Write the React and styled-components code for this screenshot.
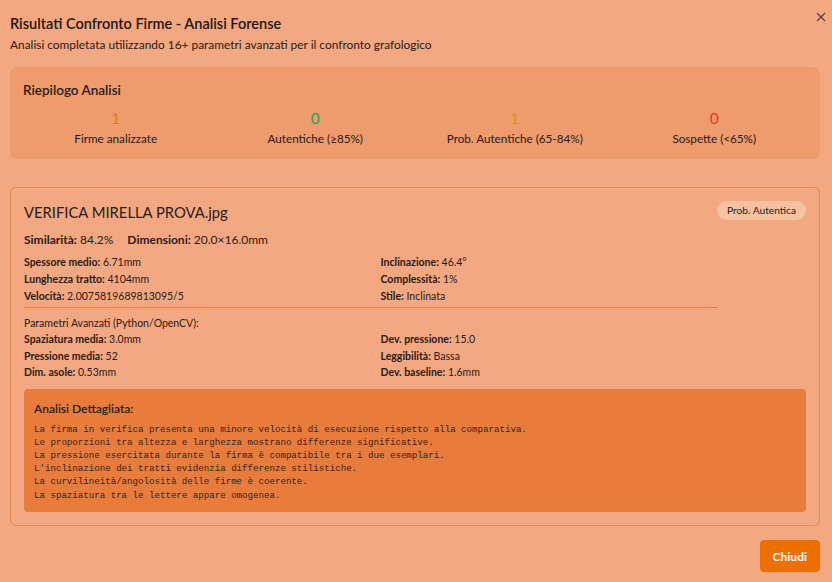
import React from 'react'
import styled, { createGlobalStyle } from 'styled-components'

const Global = createGlobalStyle`
  html, body {
    margin: 0;
    padding: 0;
    background: #f3a882;
  }
  body {
    font-family: Lato, "Noto Sans", sans-serif;
    color: #2a1a12;
  }
`

const Dialog = styled.div`
  position: relative;
  width: 832px;
  height: 582px;
  box-sizing: border-box;
  padding: 13px 12px 10px 10px;
  background: #f3a882;
  display: flex;
  flex-direction: column;
`

const Close = styled.button`
  position: absolute;
  top: 9px;
  right: 3px;
  width: 16px;
  height: 16px;
  padding: 0;
  border: 0;
  background: none;
  color: #5a4036;
  display: flex;
  align-items: center;
  justify-content: center;
`

const Title = styled.h2`
  margin: 0;
  font-size: 14.5px;
  font-weight: 600;
  line-height: 22px;
  color: #22160f;
`

const Subtitle = styled.p`
  margin: 1px 0 0;
  font-size: 11.9px;
  line-height: 18px;
`

const Summary = styled.section`
  margin-top: 13px;
  background: #ee9b6d;
  border-radius: 7px;
  padding: 14px 6px 12px;
`

const SummaryTitle = styled.h3`
  margin: 0 7px 9px;
  font-size: 13.5px;
  font-weight: 600;
  line-height: 18px;
`

const Stats = styled.div`
  display: grid;
  grid-template-columns: repeat(4, 1fr);
`

const Stat = styled.div`
  text-align: center;
`

const StatValue = styled.div`
  font-size: 15.5px;
  line-height: 20px;
  margin-bottom: 1px;
  color: ${({ tone }) => tone};
`

const StatLabel = styled.div`
  font-size: 11.7px;
  line-height: 18px;
`

const Result = styled.section`
  margin-top: 28px;
  border: 1px solid #e88a52;
  border-radius: 6px;
  padding: 12px 13px 13px;
`

const ResultHead = styled.div`
  display: flex;
  align-items: flex-start;
`

const ResultMain = styled.div`
  flex: 1;
`

const FileName = styled.h4`
  margin: 0;
  font-size: 14.8px;
  font-weight: 400;
  line-height: 24px;
`

const Headline = styled.div`
  margin-top: 7px;
  font-size: 12px;
  line-height: 18px;
  display: flex;
  gap: 14px;
  b { font-weight: 700; }
`

const Fields = styled.div`
  display: grid;
  grid-template-columns: 1fr 1fr;
  column-gap: 20px;
  margin-top: ${({ top }) => top || 0}px;
  font-size: 10.5px;
  line-height: ${({ rowH }) => rowH || 17}px;
  b { font-weight: 700; }
`

const Divider = styled.div`
  margin: 2px 0 7px;
  height: 1px;
  background: #e8803f;
`

const SectionLabel = styled.div`
  font-size: 10.5px;
  line-height: 16px;
`

const Badge = styled.span`
  margin-top: 1px;
  padding: 2px 10px;
  border-radius: 999px;
  background: #f8c2a0;
  font-size: 10.2px;
  line-height: 15px;
  white-space: nowrap;
`

const Details = styled.div`
  margin-top: 8px;
  background: #e87c3d;
  border-radius: 4px;
  padding: 11px 10px 10px;
`

const DetailsTitle = styled.div`
  font-size: 12px;
  font-weight: 600;
  line-height: 18px;
  margin-bottom: 5px;
`

const Mono = styled.pre`
  margin: 0;
  font-family: "Liberation Mono", "DejaVu Sans Mono", monospace;
  font-size: 9.15px;
  line-height: 13.2px;
  color: #3a2216;
  white-space: pre-wrap;
`

const Footer = styled.div`
  margin-top: auto;
  display: flex;
  justify-content: flex-end;
`

const Button = styled.button`
  height: 32px;
  padding: 0 13px;
  border: 0;
  border-radius: 4px;
  background: #ec7000;
  color: #fff;
  font-family: inherit;
  font-size: 12px;
  font-weight: 700;
`

const stats = [
  { value: '1', label: 'Firme analizzate', tone: '#e67a10' },
  { value: '0', label: 'Autentiche (≥85%)', tone: '#2aa34a' },
  { value: '1', label: 'Prob. Autentiche (65-84%)', tone: '#d99410' },
  { value: '0', label: 'Sospette (<65%)', tone: '#e03a2a' },
]

const basic = [
  ['Spessore medio', '6.71mm'],
  ['Inclinazione', '46.4°'],
  ['Lunghezza tratto', '4104mm'],
  ['Complessità', '1%'],
  ['Velocità', '2.0075819689813095/5'],
  ['Stile', 'Inclinata'],
]

const advanced = [
  ['Spaziatura media', '3.0mm'],
  ['Dev. pressione', '15.0'],
  ['Pressione media', '52'],
  ['Leggibilità', 'Bassa'],
  ['Dim. asole', '0.53mm'],
  ['Dev. baseline', '1.6mm'],
]

const analysis = [
  'La firma in verifica presenta una minore velocità di esecuzione rispetto alla comparativa.',
  'Le proporzioni tra altezza e larghezza mostrano differenze significative.',
  'La pressione esercitata durante la firma è compatibile tra i due esemplari.',
  "L'inclinazione dei tratti evidenzia differenze stilistiche.",
  'La curvilineità/angolosità delle firme è coerente.',
  'La spaziatura tra le lettere appare omogenea.',
]

export default function App() {
  return (
    <>
      <Global />
      <Dialog>
        <Close aria-label="Chiudi">
          <svg width="10" height="10" viewBox="0 0 10 10">
            <path d="M1 1L9 9M9 1L1 9" stroke="currentColor" strokeWidth="1.2" />
          </svg>
        </Close>
        <Title>Risultati Confronto Firme - Analisi Forense</Title>
        <Subtitle>Analisi completata utilizzando 16+ parametri avanzati per il confronto grafologico</Subtitle>

        <Summary>
          <SummaryTitle>Riepilogo Analisi</SummaryTitle>
          <Stats>
            {stats.map((s) => (
              <Stat key={s.label}>
                <StatValue tone={s.tone}>{s.value}</StatValue>
                <StatLabel>{s.label}</StatLabel>
              </Stat>
            ))}
          </Stats>
        </Summary>

        <Result>
          <ResultHead>
            <ResultMain>
              <FileName>VERIFICA MIRELLA PROVA.jpg</FileName>
              <Headline>
                <span><b>Similarità:</b> 84.2%</span>
                <span><b>Dimensioni:</b> 20.0×16.0mm</span>
              </Headline>
              <Fields top={5}>
                {basic.map(([k, v]) => (
                  <div key={k}><b>{k}:</b> {v}</div>
                ))}
              </Fields>
              <Divider />
              <SectionLabel>Parametri Avanzati (Python/OpenCV):</SectionLabel>
              <Fields rowH={16.5}>
                {advanced.map(([k, v]) => (
                  <div key={k}><b>{k}:</b> {v}</div>
                ))}
              </Fields>
            </ResultMain>
            <Badge>Prob. Autentica</Badge>
          </ResultHead>
          <Details>
            <DetailsTitle>Analisi Dettagliata:</DetailsTitle>
            <Mono>{analysis.join('\n')}</Mono>
          </Details>
        </Result>

        <Footer>
          <Button>Chiudi</Button>
        </Footer>
      </Dialog>
    </>
  )
}
